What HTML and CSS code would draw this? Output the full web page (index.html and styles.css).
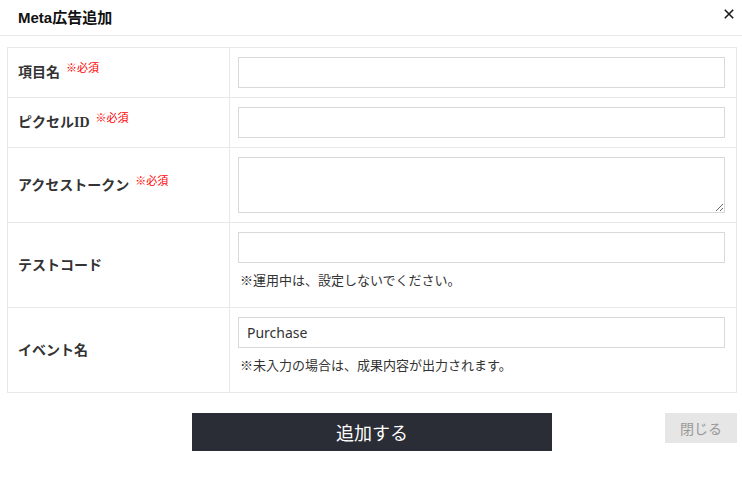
FILE: index.html
```html
<!DOCTYPE html>
<html lang="ja">
<head>
<meta charset="utf-8">
<title>Meta広告追加</title>
<link rel="stylesheet" href="styles.css">
</head>
<body>
<div class="modal">
  <header class="modal-header">
    <h1 class="modal-title">Meta広告追加</h1>
    <button class="close-x" type="button" aria-label="閉じる">
      <svg width="10" height="10" viewBox="0 0 10 10"><path d="M0.8 0.8 L9.2 9.2 M9.2 0.8 L0.8 9.2" stroke="#1a1a1a" stroke-width="1.6" fill="none"/></svg>
    </button>
  </header>
  <div class="modal-body">
    <div class="form-grid">
      <div class="label-cell">項目名<span class="req">※必須</span></div>
      <div class="value-cell"><input class="text-input" type="text"></div>

      <div class="label-cell">ピクセルID<span class="req">※必須</span></div>
      <div class="value-cell"><input class="text-input" type="text"></div>

      <div class="label-cell">アクセストークン<span class="req">※必須</span></div>
      <div class="value-cell"><textarea class="text-area"></textarea></div>

      <div class="label-cell">テストコード</div>
      <div class="value-cell">
        <input class="text-input" type="text">
        <p class="note">※運用中は、設定しないでください。</p>
      </div>

      <div class="label-cell">イベント名</div>
      <div class="value-cell">
        <input class="text-input" type="text" value="Purchase">
        <p class="note">※未入力の場合は、成果内容が出力されます。</p>
      </div>
    </div>
    <div class="actions">
      <button class="btn-primary" type="button">追加する</button>
      <button class="btn-close" type="button">閉じる</button>
    </div>
  </div>
</div>
</body>
</html>
```

FILE: styles.css
```css
* { box-sizing: border-box; }

html, body {
  margin: 0;
  padding: 0;
  background: #fff;
}

body {
  font-family: "Noto Sans CJK JP", "Noto Sans", sans-serif;
  color: #333;
}

.modal-header {
  position: relative;
  height: 36px;
  border-bottom: 1px solid #e9e9e9;
  padding-left: 18px;
}

.modal-title {
  margin: 0;
  font-family: "Liberation Sans", "Noto Sans CJK JP", sans-serif;
  font-size: 15px;
  font-weight: bold;
  line-height: 35px;
  color: #111;
}

.close-x {
  position: absolute;
  top: 9px;
  right: 8px;
  width: 10px;
  height: 10px;
  padding: 0;
  border: 0;
  background: none;
  display: block;
}
.close-x svg { display: block; }

.modal-body {
  padding: 11px 5px 0 7px;
}

.form-grid {
  display: grid;
  grid-template-columns: 222px 1fr;
  border-left: 1px solid #e8e8e8;
  border-top: 1px solid #e8e8e8;
}

.label-cell,
.value-cell {
  border-right: 1px solid #e8e8e8;
  border-bottom: 1px solid #e8e8e8;
}

.label-cell {
  display: flex;
  align-items: center;
  padding: 0 0 3px 10px;
  font-family: "Liberation Serif", "Noto Sans CJK JP", serif;
  font-weight: bold;
  font-size: 14px;
  color: #333;
}

.req {
  font-family: "Noto Sans CJK JP", sans-serif;
  font-weight: normal;
  font-size: 11px;
  color: #ff0000;
  margin-left: 6px;
  position: relative;
  top: -4px;
}

.value-cell {
  padding: 9px 11px 9px 8px;
}

.text-input,
.text-area {
  display: block;
  width: 100%;
  margin: 0;
  border: 1px solid #d9d9d9;
  border-radius: 0;
  background: #fff;
  font-family: "Noto Sans", "Noto Sans CJK JP", sans-serif;
  font-size: 14px;
  color: #333;
  outline: none;
}

.text-input {
  height: 31px;
  padding: 0 8px;
}

.text-area {
  height: 56px;
  padding: 6px 8px;
  resize: vertical;
}

.note {
  margin: 6px 0 8px;
  padding-left: 2px;
  font-size: 13px;
  line-height: 21px;
  color: #333;
}

.actions {
  position: relative;
  margin-top: 20px;
  display: flex;
  justify-content: center;
}

.btn-primary {
  width: 360px;
  height: 38px;
  border: 0;
  border-radius: 0;
  background: #2a2d35;
  color: #fff;
  font-family: "Noto Sans CJK JP", sans-serif;
  font-size: 18px;
  padding: 0;
}

.btn-close {
  position: absolute;
  top: 0;
  right: 0;
  width: 72px;
  height: 30px;
  border: 0;
  border-radius: 0;
  background: #e6e6e6;
  color: #999;
  font-family: "Noto Sans CJK JP", sans-serif;
  font-size: 14px;
  padding: 0;
}
```
